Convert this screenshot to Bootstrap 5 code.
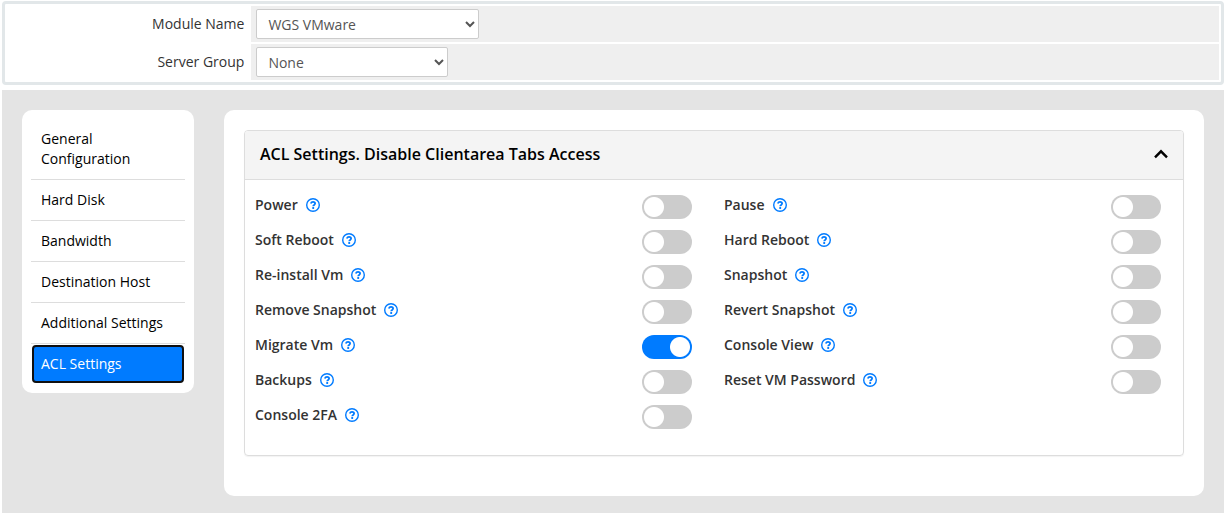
<!DOCTYPE html>
<html lang="en">
<head>
<meta charset="utf-8">
<meta name="viewport" content="width=device-width, initial-scale=1">
<title>Module Settings</title>
<link href="https://cdn.jsdelivr.net/npm/bootstrap@5.3.0/dist/css/bootstrap.min.css" rel="stylesheet">
<style>
  body { font: 14px/20px "Open Sans", sans-serif; color: #333; padding: 1px 2px 0; }
  .module-form { border: 3px solid #e2e7e9; border-radius: 4px; padding: 2px; gap: 2px; margin-bottom: 5px; }
  .form-line { gap: 2px; }
  .line-label { width: 20%; padding: 8px 5px; }
  .line-field { background: #efefef; padding: 3px 5px; }
  .field-select { height: 30px; border: 1px solid #ccc; border-radius: 2px; background: #fff; color: #555; padding: 4px 8px 4px 7px; max-width: 100%; }
  .select-module { width: 223px; }
  .select-group { width: 192px; }
  .workspace { background: #e4e4e4; padding: 20px; gap: 30px; }
  .side-tabs { width: 172px; padding: 9px; border-radius: 10px; }
  .side-tab { border: 0; border-bottom: 1px solid #ddd; background: none; color: #000; padding: 10px; }
  .side-tab.active { margin: 1px; padding: 7px; border: 2px solid #101010; border-radius: 4px; background: #007bff; color: #fff; }
  .panel-box { border-radius: 10px; padding: 20px 20px 40px; min-width: 0; }
  .acl-card { border: 1px solid #ddd; border-radius: 4px; box-shadow: 0 1px 1px rgba(0,0,0,.05); }
  .acl-head { background: #f4f4f4; border: 0; border-bottom: 1px solid #ddd; border-radius: 3px 3px 0 0; padding: 13px 15px 15px; color: #000; }
  .acl-title { font-size: 16px; line-height: 20px; font-weight: 600; }
  .acl-body { padding: 10px 0 20px; }
  .acl-item { height: 35px; padding: 5px 22px 0 10px; }
  .acl-item label { font-weight: 600; }
  .help-link { color: #007bff; margin-left: 8px; }
  .switch { appearance: none; width: 50px; height: 24px; border-radius: 12px; margin: 0; cursor: pointer;
    background: radial-gradient(circle at 12px 12px, #fff 9.5px, transparent 10.5px) #ccc; }
  .switch:checked { background: radial-gradient(circle at 38px 12px, #fff 9.5px, transparent 10.5px) #007bff; }
</style>
</head>
<body class="d-flex flex-column min-vh-100 bg-white">
<svg class="d-none" xmlns="http://www.w3.org/2000/svg">
  <symbol id="help" viewBox="0 0 14 14">
    <circle cx="7" cy="7" r="6.3" fill="none" stroke="currentColor" stroke-width="1.4"/>
    <path d="M4.800 5.500C5.200 4.400 6 3.900 7 3.900c1.200 0 2.100.700 2.100 1.700 0 1.300-1.900 1.300-1.900 2.600" fill="none" stroke="currentColor" stroke-width="1.800"/>
    <rect x="6.200" y="9" width="2" height="1.900" rx=".6" fill="currentColor"/>
  </symbol>
</svg>

<form class="module-form d-flex flex-column">
  <div class="form-line d-flex">
    <label class="line-label text-end" for="module">Module Name</label>
    <div class="line-field flex-fill"><select class="field-select select-module d-block" id="module"><option>WGS VMware</option></select></div>
  </div>
  <div class="form-line d-flex">
    <label class="line-label text-end" for="group">Server Group</label>
    <div class="line-field flex-fill"><select class="field-select select-group d-block" id="group"><option>None</option></select></div>
  </div>
</form>

<main class="workspace d-flex align-items-start flex-grow-1">
  <nav class="side-tabs bg-white d-flex flex-column flex-shrink-0">
    <button type="button" class="side-tab text-start">General Configuration</button>
    <button type="button" class="side-tab text-start">Hard Disk</button>
    <button type="button" class="side-tab text-start">Bandwidth</button>
    <button type="button" class="side-tab text-start">Destination Host</button>
    <button type="button" class="side-tab text-start">Additional Settings</button>
    <button type="button" class="side-tab text-start active">ACL Settings</button>
  </nav>
  <section class="panel-box bg-white flex-fill">
    <div class="acl-card">
      <button type="button" class="acl-head w-100 d-flex justify-content-between align-items-center" data-bs-toggle="collapse" data-bs-target="#acl" aria-expanded="true">
        <span class="acl-title">ACL Settings. Disable Clientarea Tabs Access</span>
        <svg width="14" height="10" viewBox="0 0 14 10" aria-hidden="true"><path d="M1 8.300 7 2.300l6 6" fill="none" stroke="#000" stroke-width="2.400"/></svg>
      </button>
      <div class="collapse show" id="acl">
        <div class="acl-body row g-0" id="acl-list"></div>
      </div>
    </div>
  </section>
</main>

<script>
  const tabs = ["Power", "Pause", "Soft Reboot", "Hard Reboot", "Re-install Vm", "Snapshot", "Remove Snapshot",
    "Revert Snapshot", "Migrate Vm", "Console View", "Backups", "Reset VM Password", "Console 2FA"];
  document.getElementById("acl-list").innerHTML = tabs.map((name, i) => `
    <div class="acl-item col-6 d-flex align-items-start">
      <label for="acl-${i}">${name}</label>
      <a href="#" class="help-link d-flex" aria-label="Help: ${name}"><svg width="14" height="20"><use href="#help" y="3" width="14" height="14"/></svg></a>
      <input type="checkbox" class="switch ms-auto" id="acl-${i}" ${name === "Migrate Vm" ? "checked" : ""}>
    </div>`).join("");
</script>
<script src="https://cdn.jsdelivr.net/npm/bootstrap@5.3.0/dist/js/bootstrap.bundle.min.js"></script>
</body>
</html>
